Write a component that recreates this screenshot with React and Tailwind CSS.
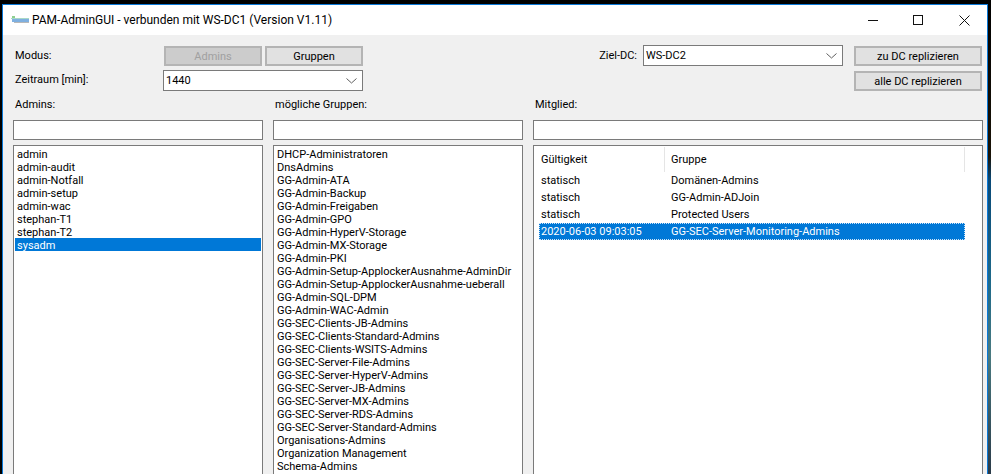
const font = { fontFamily: 'Roboto, "Liberation Sans", Arial, sans-serif' };
const admins = ["admin","admin-audit","admin-Notfall","admin-setup","admin-wac","stephan-T1","stephan-T2","sysadm"];
const gruppen = ["DHCP-Administratoren","DnsAdmins","GG-Admin-ATA","GG-Admin-Backup","GG-Admin-Freigaben","GG-Admin-GPO","GG-Admin-HyperV-Storage","GG-Admin-MX-Storage","GG-Admin-PKI","GG-Admin-Setup-ApplockerAusnahme-AdminDir","GG-Admin-Setup-ApplockerAusnahme-ueberall","GG-Admin-SQL-DPM","GG-Admin-WAC-Admin","GG-SEC-Clients-JB-Admins","GG-SEC-Clients-Standard-Admins","GG-SEC-Clients-WSITS-Admins","GG-SEC-Server-File-Admins","GG-SEC-Server-HyperV-Admins","GG-SEC-Server-JB-Admins","GG-SEC-Server-MX-Admins","GG-SEC-Server-RDS-Admins","GG-SEC-Server-Standard-Admins","Organisations-Admins","Organization Management","Schema-Admins"];
const rows = [["statisch","Domänen-Admins"],["statisch","GG-Admin-ADJoin"],["statisch","Protected Users"],["2020-06-03 09:03:05","GG-SEC-Server-Monitoring-Admins"]];

function Chevron() {
  return <svg width="11" height="6" viewBox="0 0 11 6" fill="none" stroke="#606060" strokeWidth="1"><path d="M0.5 0.5 L5.5 5 L10.5 0.5" /></svg>;
}
function Btn({ children, className = "", disabled }) {
  return <div className={`h-5 flex items-center justify-center border-2 border-[#b4b4b4] ${disabled ? "bg-[#cccccc] text-[#a0a0a0]" : "bg-[#e1e1e1] text-black"} ${className}`}>{children}</div>;
}
function Combo({ value, className = "" }) {
  return <div className={`h-[21px] flex items-center justify-between bg-white border border-[#7a7a7a] pl-[2px] pr-[5px] ${className}`}><span>{value}</span><Chevron /></div>;
}
function Input() { return <div className="h-5 bg-white border border-[#7a7a7a]" />; }

export default function App() {
  return (
    <div style={font} className="w-[991px] h-[474px] border-l-2 border-black bg-[linear-gradient(to_bottom,#000000_0%,#1a1408_33%,#0a4a78_38%,#1f6a8a_60%,#4a7a80_75%,#2a3a48_100%)] overflow-hidden pt-1 text-[11px] leading-[13px] text-black">
      <div className="w-[986px] h-[470px] flex flex-col border-l border-r border-t border-[#0a78d7] bg-[#f0f0f0]">
        <div className="h-[30px] shrink-0 bg-white flex items-center">
          <svg className="ml-[8px]" width="18" height="8" viewBox="0 0 18 8"><rect x="1" y="0" width="3" height="2" fill="#8fd08f"/><rect x="0" y="2" width="18" height="1" fill="#a8d8c8"/><rect x="1" y="3" width="17" height="3" fill="#7fb0e0"/><rect x="3" y="6" width="15" height="1" fill="#b8b8b8"/></svg>
          <span className="ml-[3px] text-[12px]">PAM-AdminGUI - verbunden mit WS-DC1 (Version V1.11)</span>
          <div className="ml-auto flex items-center mr-[17px]">
            <svg width="10" height="10" viewBox="0 0 10 10" stroke="#111" fill="none"><path d="M0 5.5H10"/></svg>
            <svg className="ml-[35px]" width="10" height="10" viewBox="0 0 10 10" stroke="#111" fill="none"><rect x="0.5" y="0.5" width="9" height="9"/></svg>
            <svg className="ml-[36px]" width="11" height="11" viewBox="0 0 11 11" stroke="#111" fill="none"><path d="M0.5 0.5L10.5 10.5M10.5 0.5L0.5 10.5"/></svg>
          </div>
        </div>
        <div className="flex-1 min-h-0 flex flex-col pl-[10px] pr-[3px] pt-[11px]">
          <div className="flex h-[51px] shrink-0">
            <div className="w-[150px] flex flex-col -mt-[1px]">
              <div className="h-5 pl-[2px] flex items-center">Modus:</div>
              <div className="mt-[4px] h-[21px] pl-[2px] flex items-center">Zeitraum [min]:</div>
            </div>
            <div className="w-[200px] flex flex-col">
              <div className="flex gap-[3px] pl-[1px]">
                <Btn disabled className="w-[98px]">Admins</Btn>
                <Btn className="w-[98px]">Gruppen</Btn>
              </div>
              <Combo value="1440" className="mt-[4px] w-[200px]" />
            </div>
            <div className="w-[280px] h-[18px] flex items-center justify-end pr-[6px]">Ziel-DC:</div>
            <Combo value="WS-DC2" className="-mt-[1px] w-[200px]" />
            <div className="ml-[11px] flex flex-col gap-[5px]">
              <Btn className="w-[128px]">zu DC replizieren</Btn>
              <Btn className="w-[128px]">alle DC replizieren</Btn>
            </div>
          </div>
          <div className="flex gap-[10px] flex-1 min-h-0">
            <Col label="Admins:" w="w-[250px]">
              <div className="pt-[1px] px-[1px]">
                {admins.map(a => <div key={a} className={`h-[13px] leading-[15px] pl-[2px] ${a === "sysadm" ? "bg-[#0078d7] text-white" : ""}`}>{a}</div>)}
              </div>
            </Col>
            <Col label="mögliche Gruppen:" w="w-[250px]">
              <div className="pt-[1px] px-[1px]">
                {gruppen.map(g => <div key={g} className="h-[13px] leading-[15px] pl-[2px] whitespace-nowrap">{g}</div>)}
              </div>
            </Col>
            <Col label="Mitglied:" w="w-[450px]">
              <div className="flex h-[25px] ml-[5px] mt-px">
                <div className="w-[126px] pl-[2px] flex items-center border-r border-[#e5e5e5]">Gültigkeit</div>
                <div className="w-[300px] pl-[6px] flex items-center border-r border-[#e5e5e5]">Gruppe</div>
              </div>
              <div>
                {rows.map((r, i) => {
                  const sel = i === 3;
                  return <div key={i} className={`flex h-[17px] items-center w-[426px] ml-[5px] ${sel ? "bg-[#0078d7] text-white outline-1 -outline-offset-1 outline-dotted outline-[#cfe4f7]" : ""}`}>
                    <div className="w-[126px] pl-[2px]">{r[0]}</div><div className="pl-[6px]">{r[1]}</div>
                  </div>;
                })}
              </div>
            </Col>
          </div>
        </div>
      </div>
    </div>
  );
}
function Col({ label, w, children }) {
  return (
    <div className={`${w} flex flex-col shrink-0 min-h-0`}>
      <div className="h-[13px] pl-[2px] mt-px mb-[9px]">{label}</div>
      <Input />
      <div className="mt-[5px] flex-1 min-h-0 bg-white border-t border-l border-r border-[#7a7a7a] overflow-hidden">{children}</div>
    </div>
  );
}
